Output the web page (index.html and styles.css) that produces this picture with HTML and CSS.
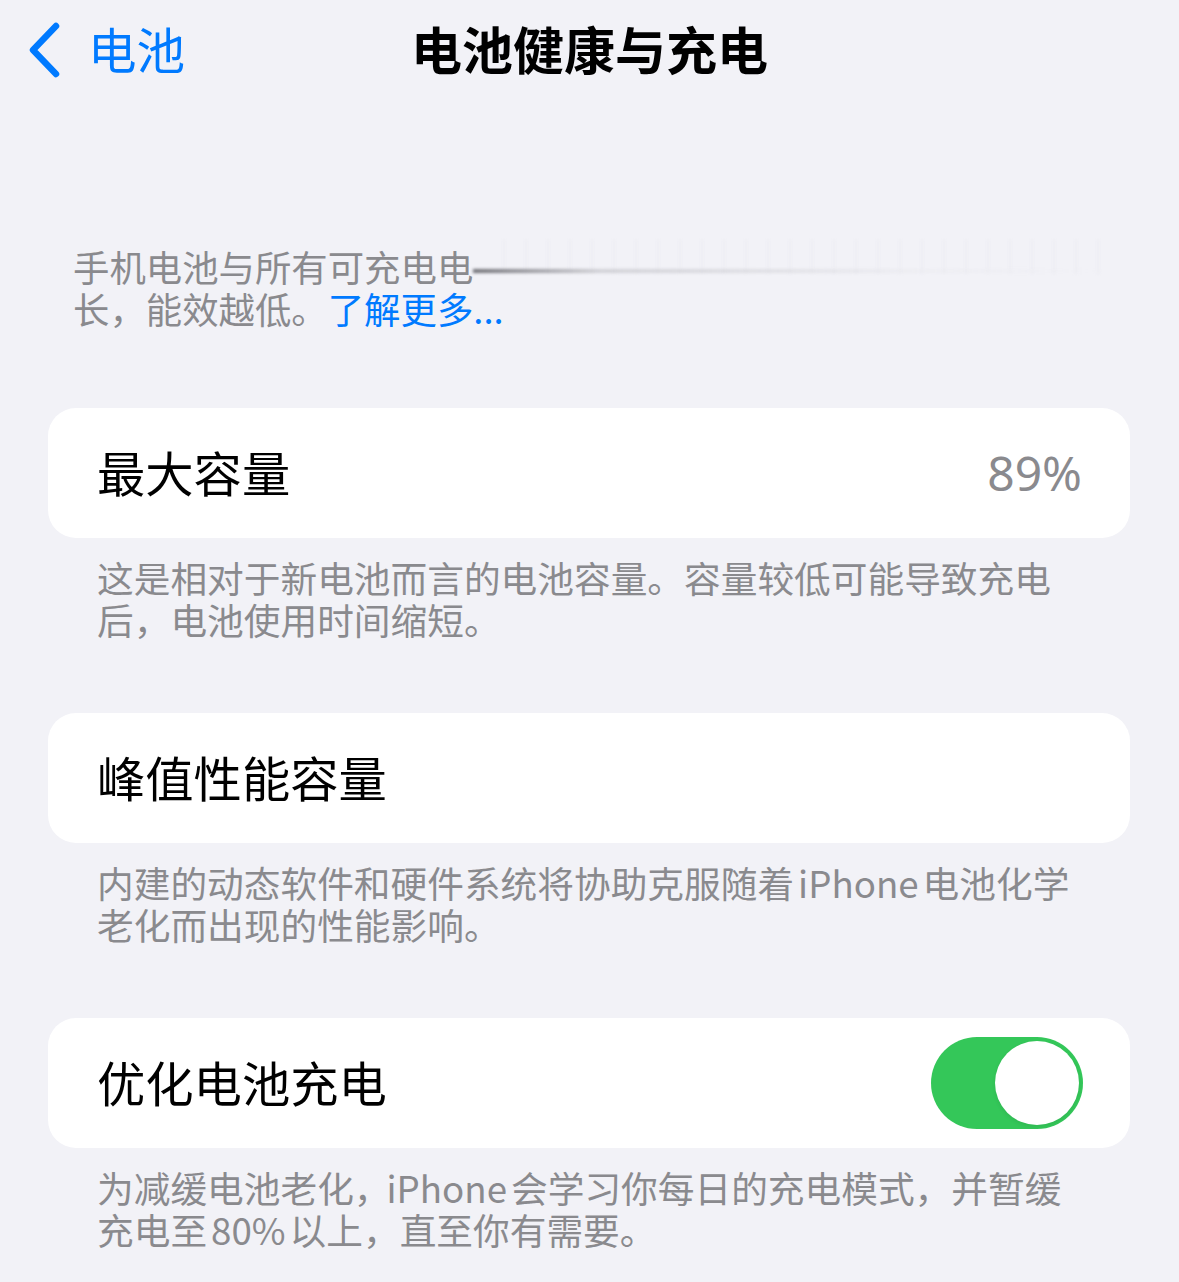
FILE: index.html
```html
<!DOCTYPE html>
<html lang="zh-CN">
<head>
  <meta charset="UTF-8" />
  <meta name="viewport" content="width=device-width, initial-scale=1.0"/>
  <title>电池健康与充电</title>
  <link rel="stylesheet" href="styles.css">
</head>

<body>
  <header class="nav">
    <a class="nav-back" href="#">
      <svg class="nav-chevron" width="34" height="56" viewBox="0 0 34 56">
        <path d="M28 4 L5 28 L28 52" fill="none" stroke="#007aff" stroke-width="6.5" stroke-linecap="round" stroke-linejoin="round"/>
      </svg>
      <span>电池</span>
    </a>
    <h1 class="nav-title">电池健康与充电</h1>
    <div></div>
  </header>

  <p class="intro">
    <span class="intro-line">手机电池与所有可充电电<span class="intro-streak"></span></span><br>
    长，能效越低。<a class="link" href="#">了解更多...</a>
  </p>

  <section class="group">
    <div class="card">
      <span class="card-label">最大容量</span>
      <span class="card-value">89%</span>
    </div>
    <p class="note">这是相对于新电池而言的电池容量。容量较低可能导致充电<br>后，电池使用时间缩短。</p>
  </section>

  <section class="group">
    <div class="card">
      <span class="card-label">峰值性能容量</span>
    </div>
    <p class="note">内建的动态软件和硬件系统将协助克服随着<span class="latin">iPhone</span>电池化学<br>老化而出现的性能影响。</p>
  </section>

  <section class="group">
    <div class="card">
      <span class="card-label">优化电池充电</span>
      <label class="switch">
        <input type="checkbox" checked>
        <span class="switch-track"><span class="switch-knob"></span></span>
      </label>
    </div>
    <p class="note">为减缓电池老化，<span class="latin latin-after-punct">iPhone</span>会学习你每日的充电模式，并暂缓<br>充电至<span class="latin">80%</span>以上，直至你有需要。</p>
  </section>
</body>
</html>
```

FILE: styles.css
```css
* {
  box-sizing: border-box;
  margin: 0;
  padding: 0;
}

body {
  background-color: #f2f2f7;
  font-family: 'Noto Sans CJK SC', 'Noto Sans', sans-serif;
  color: #000;
  width: 1179px;
  min-height: 1282px;
  overflow: hidden;
}

a {
  text-decoration: none;
}

/* top navigation bar */
.nav {
  height: 100px;
  display: grid;
  grid-template-columns: 1fr auto 1fr;
  align-items: center;
}

.nav-back {
  display: flex;
  align-items: center;
  gap: 26px;
  padding-left: 28px;
  color: #007aff;
  font-size: 48.5px;
  line-height: 1;
}

.nav-back span {
  position: relative;
  top: -2px;
}

.nav-title {
  font-size: 51px;
  font-weight: 700;
  line-height: 1;
  position: relative;
  top: -2px;
}

/* intro paragraph */
.intro {
  margin-top: 145px;
  padding-left: 73px;
  font-size: 36.4px;
  line-height: 42px;
  color: #8a8a8e;
}

.intro-line {
  position: relative;
}

.intro-streak {
  position: absolute;
  left: 100%;
  top: 0;
  width: 630px;
  height: 42px;
  background:
    linear-gradient(90deg, rgba(90, 90, 96, 0.85), rgba(160, 160, 166, 0.4) 20%, rgba(210, 210, 216, 0.12) 70%, rgba(242, 242, 247, 0)) 0 29px / 100% 4px no-repeat,
    repeating-linear-gradient(90deg, rgba(225, 225, 232, 0.25) 0 2px, transparent 2px 22px) 30px 0 / 100% 34px no-repeat;
  filter: blur(1.4px);
}

.link {
  color: #007aff;
}

/* grouped cards */
.group {
  padding: 0 49px 0 48px;
}

.group:first-of-type {
  margin-top: 79px;
}

.group + .group {
  margin-top: 73px;
}

.card {
  height: 130px;
  background-color: #fff;
  border-radius: 28px;
  display: flex;
  align-items: center;
  justify-content: space-between;
  padding: 0 48px 0 49px;
}

.card-label {
  font-size: 48.3px;
  line-height: 1;
  position: relative;
  top: -2px;
}

.card-value {
  font-family: 'Noto Sans', 'Noto Sans CJK SC', sans-serif;
  font-size: 48px;
  color: #8a8a8e;
  line-height: 1;
}

.note {
  margin-top: 18px;
  padding-left: 49px;
  font-size: 36.7px;
  line-height: 42px;
  color: #8a8a8e;
  white-space: nowrap;
}

/* latin words inside CJK text get a little breathing room */
.latin {
  margin: 0 4px;
}

.latin-after-punct {
  margin-left: -4px;
}

/* toggle switch */
.switch {
  display: block;
  margin-right: -1px;
}

.switch input {
  display: none;
}

.switch-track {
  display: flex;
  justify-content: flex-end;
  align-items: center;
  width: 152px;
  height: 92px;
  padding: 4px;
  border-radius: 46px;
  background-color: #34c759;
}

.switch-knob {
  width: 84px;
  height: 84px;
  border-radius: 50%;
  background-color: #fff;
  box-shadow: 0 2px 4px rgba(0, 0, 0, 0.08);
}
```
